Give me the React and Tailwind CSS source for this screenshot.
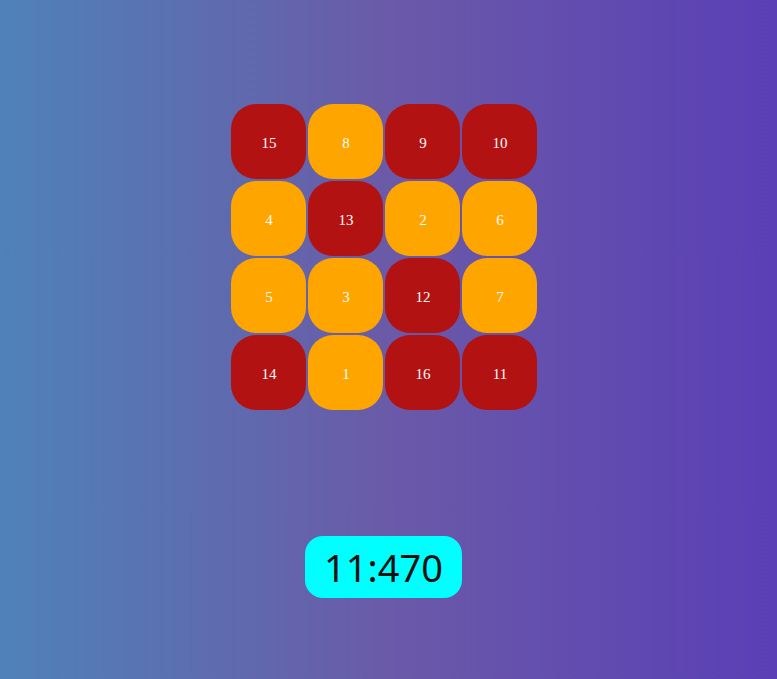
export default function App() {
  const tiles = [
    [15, "r"], [8, "o"], [9, "r"], [10, "r"],
    [4, "o"], [13, "r"], [2, "o"], [6, "o"],
    [5, "o"], [3, "o"], [12, "r"], [7, "o"],
    [14, "r"], [1, "o"], [16, "r"], [11, "r"],
  ];
  return (
    <div className="w-full h-[679px] bg-[linear-gradient(to_right,#4f82b8_0%,#6a5aa8_50%,#5a3fb6_100%)] flex flex-col items-center pr-[10px]">
      <div className="mt-[104px] grid grid-cols-[repeat(4,75px)] gap-x-[2px] gap-y-[2px]">
        {tiles.map(([n, c]) => (
          <div
            key={n}
            className={
              "w-[75px] h-[75px] rounded-[25px] flex items-center justify-center pt-[3px] pl-[2px] text-white text-[15px] font-['Liberation_Serif',serif] " +
              (c === "r" ? "bg-[#b21212]" : "bg-[#ffa500]")
            }
          >
            {n}
          </div>
        ))}
      </div>
      <div className="mt-[126px] w-[157px] h-[62px] rounded-[18px] bg-[#00ffff] flex items-center justify-center text-[38px] text-[#111] font-['Noto_Sans',sans-serif]">
        11:470
      </div>
    </div>
  );
}
